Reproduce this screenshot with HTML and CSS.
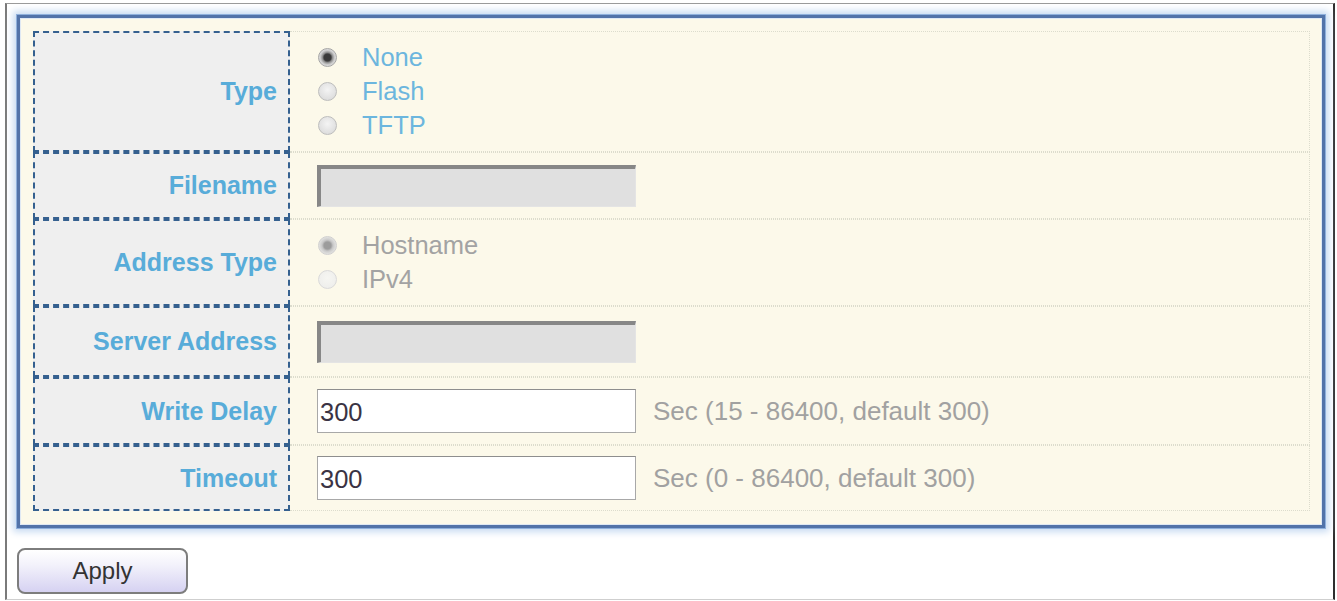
FILE: index.html
```html
<!DOCTYPE html>
<html>
<head>
<meta charset="utf-8">
<link rel="stylesheet" href="styles.css">
</head>
<body>
<div class="frame">
  <div class="panel">
    <div class="form">
      <div class="label">Type</div>
      <div class="value">
        <div class="radios">
          <label class="opt"><input type="radio" class="radio" name="type" checked><span>None</span></label>
          <label class="opt"><input type="radio" class="radio" name="type"><span>Flash</span></label>
          <label class="opt"><input type="radio" class="radio" name="type"><span>TFTP</span></label>
        </div>
      </div>

      <div class="label">Filename</div>
      <div class="value"><input type="text" class="field disabled" disabled></div>

      <div class="label">Address Type</div>
      <div class="value">
        <div class="radios dis">
          <label class="opt"><input type="radio" class="radio" name="addr" checked disabled><span>Hostname</span></label>
          <label class="opt"><input type="radio" class="radio" name="addr" disabled><span>IPv4</span></label>
        </div>
      </div>

      <div class="label">Server Address</div>
      <div class="value"><input type="text" class="field disabled" disabled></div>

      <div class="label">Write Delay</div>
      <div class="value"><input type="text" class="field" value="300"><span class="hint">Sec (15 - 86400, default 300)</span></div>

      <div class="label">Timeout</div>
      <div class="value"><input type="text" class="field" value="300"><span class="hint">Sec (0 - 86400, default 300)</span></div>
    </div>
  </div>
  <div class="actions">
    <button class="btn">Apply</button>
  </div>
</div>
</body>
</html>
```

FILE: styles.css
```css
html, body {
  margin: 0;
  padding: 0;
  background: #ffffff;
  font-family: "Liberation Sans", Arial, sans-serif;
}

.frame {
  box-sizing: border-box;
  margin: 3px 2px 0 5px;
  height: 597px;
  border-left: 2px solid #7a7a7a;
  border-top: 1px solid #9a9a9a;
  border-right: 2px solid #2e2e2e;
  border-bottom: 1px solid #cfcfcf;
  padding: 11px 8px 0 10px;
}

.panel {
  box-sizing: border-box;
  height: 513px;
  border: 3px solid #5273a9;
  background: #fcf9ea;
  box-shadow: 0 0 0 1px #8fb0dc, 0 0 7px 4px #c8dbf2, inset 0 0 0 1px #dfe8f3;
  padding: 13px 12px 13px 13px;
}

.form {
  display: grid;
  grid-template-columns: 257px 1fr;
  grid-template-rows: 121px 67px 87px 71px 68px 66px;
}

.label {
  box-sizing: border-box;
  background: #efefef;
  border: 2px dashed #35608f;
  display: flex;
  align-items: center;
  justify-content: flex-end;
  padding-right: 11px;
  font-weight: bold;
  font-size: 25px;
  color: #58acd9;
}

.value {
  box-sizing: border-box;
  border-top: 1px dotted #dcdccd;
  border-bottom: 1px dotted #dcdccd;
  border-right: 1px dotted #dcdccd;
  display: flex;
  align-items: center;
  padding-left: 27px;
}

.radios {
  display: flex;
  flex-direction: column;
}

.opt {
  display: flex;
  align-items: center;
  height: 34px;
  font-size: 25.5px;
  color: #6cb6de;
}

.radios.dis .opt {
  color: #a3a3a3;
}

.radio {
  appearance: none;
  -webkit-appearance: none;
  box-sizing: border-box;
  width: 19px;
  height: 19px;
  margin: 0 25px 0 1px;
  border-radius: 50%;
  border: 1px solid #bdbdbd;
  background: radial-gradient(circle at 50% 40%, #f4f4f4 0, #e2e2e2 60%, #d6d6d6 100%);
}

.radio:checked {
  border-color: #a5a5a5;
  background: radial-gradient(circle, #3a3a3a 0, #3a3a3a 3.5px, #8e8e8e 5px, #c9c9c9 7px, #e4e4e4 9px);
}

.radio:disabled {
  border-color: #dadada;
  background: radial-gradient(circle at 50% 40%, #f6f6f2 0, #ececea 100%);
}

.radio:disabled:checked {
  border-color: #d0d0d0;
  background: radial-gradient(circle, #9c9c9c 0, #9c9c9c 3.5px, #c8c8c8 5.5px, #e6e6e4 9px);
}

.field {
  box-sizing: border-box;
  width: 319px;
  height: 44px;
  margin: 0;
  border: 1px solid #a8a8a8;
  border-top-color: #8e8e8e;
  background: #ffffff;
  padding: 2px 2px 0 2px;
  font-family: "Liberation Sans", Arial, sans-serif;
  font-size: 25.5px;
  color: #3a3344;
  outline: none;
}

.field.disabled {
  height: 42px;
  background: #e0e0e0;
  border-top: 4px solid #878787;
  border-left: 4px solid #878787;
  border-right: 1px solid #e4e4e4;
  border-bottom: 1px solid #e4e4e4;
}

.hint {
  margin-left: 17px;
  font-size: 26px;
  color: #a1a1a1;
}

.actions {
  margin-top: 20px;
}

.btn {
  box-sizing: border-box;
  width: 171px;
  height: 46px;
  border: 2px solid #7d7d7d;
  border-radius: 8px;
  background: linear-gradient(#ffffff 0%, #f3f2fb 35%, #d6d2f2 100%);
  font-family: "Liberation Sans", Arial, sans-serif;
  font-size: 24px;
  color: #333333;
  padding: 0;
}
```
